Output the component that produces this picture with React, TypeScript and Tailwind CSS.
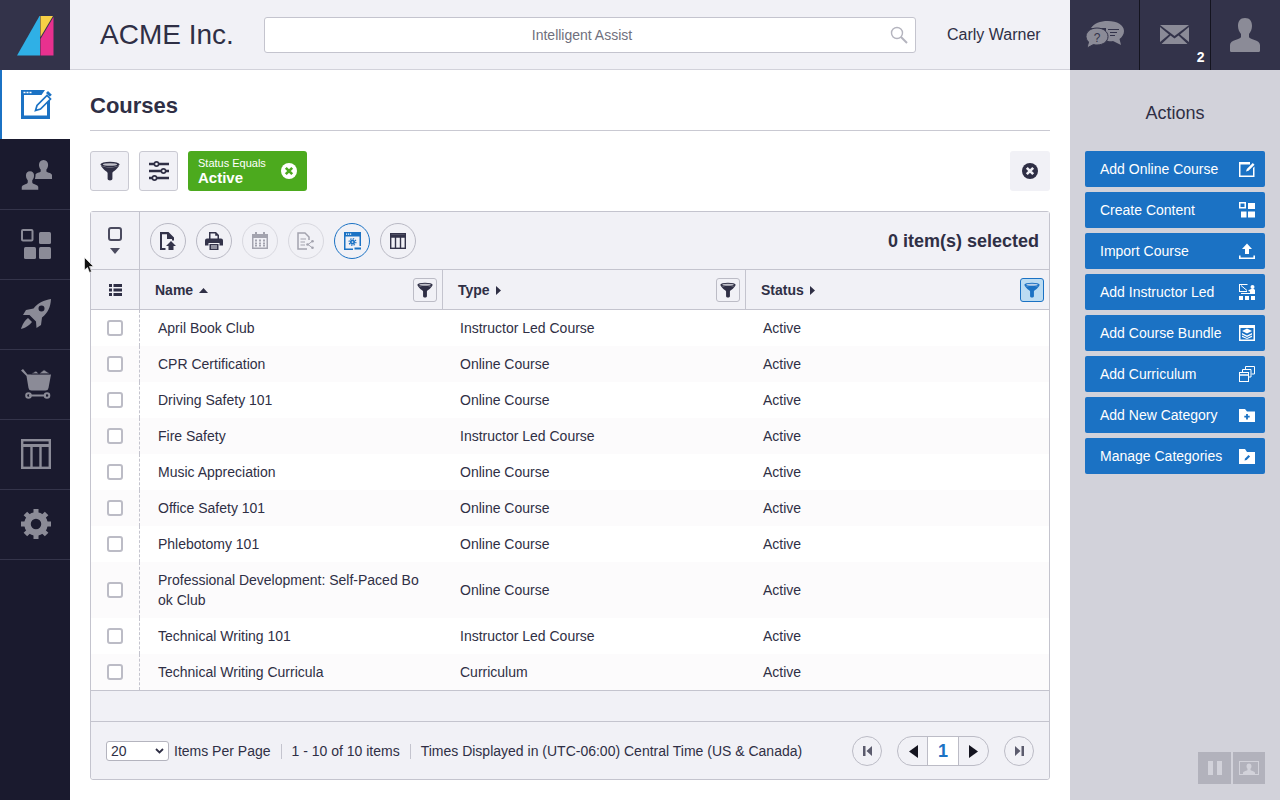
import React from "react";

const Funnel = ({ c = "#2f2f45", s = 20 }: { c?: string; s?: number }) => (
  <svg width={s} height={s} viewBox="0 0 20 20">
    <ellipse cx="10" cy="3.6" rx="9.6" ry="2.8" fill={c} />
    <ellipse cx="10" cy="3.500" rx="7.200" ry="1.300" fill="#f1f1f6" opacity="0.75" />
    <path d="M.8 4.500 C3 9 7.600 10.500 7.600 12 V17.800 C7.600 20 12.400 20 12.400 17.800 V12 C12.400 10.500 17 9 19.200 4.500 C15 7 5 7 .8 4.500Z" fill={c} />
  </svg>
);

const Sliders = () => (
  <svg width="22" height="22" viewBox="0 0 22 22" fill="none" stroke="#2f2f45" strokeWidth="2.300">
    <path d="M1 4H6M11 4H21M1 11H13M18 11H21M1 18H4M9 18H21" />
    <circle cx="8.500" cy="4" r="2.100" strokeWidth="1.600" />
    <circle cx="15.500" cy="11" r="2.100" strokeWidth="1.600" />
    <circle cx="6.500" cy="18" r="2.100" strokeWidth="1.600" />
  </svg>
);

const XCircle = ({ bg, fg, s = 16 }: { bg: string; fg: string; s?: number }) => (
  <svg width={s} height={s} viewBox="0 0 16 16">
    <circle cx="8" cy="8" r="8" fill={bg} />
    <path d="M4.800 4.800L11.200 11.200M11.200 4.800L4.800 11.200" stroke={fg} strokeWidth="2.600" />
  </svg>
);

const Logo = () => (
  <svg width="40" height="42" viewBox="0 0 40 42">
    <path d="M1 40.500 L23.500 1 H24 V40.500Z" fill="#2fb0e6" />
    <path d="M24.500 1 H37 L24.500 22Z" fill="#f7cf45" />
    <path d="M24.500 24 L37.500 2 V40.500 H24.500Z" fill="#e8318f" />
  </svg>
);

const G = "#8b8b97";

const NavCourse = () => (
  <svg width="31" height="29" viewBox="0 0 31 29">
    <path d="M0 0H24L20.500 5H3V25.500H26V12L29 9V29H0Z" fill="#1b72c4" />
    <path d="M2.500 1.700h2v1.600h-2zM5.500 1.700h2v1.600h-2zM8.500 1.700h2v1.600h-2z" fill="#fff" />
    <path d="M14.500 20.500l1.500-5L26 5.500l3.500 3.500-10 10z" fill="#fff" stroke="#1b72c4" strokeWidth="1.700" />
    <path d="M27 1l3.800 3.800-2 2-3.800-3.800z" fill="#1b72c4" />
  </svg>
);
const Bust = ({ x, y, k }: { x: number; y: number; k: number }) => (
  <path
    transform={`translate(${x} ${y}) scale(${k})`}
    d="M9 0c3.200 0 4.800 2.300 4.800 5.300 0 2-.8 3.700-1.800 4.700v2c0 1 6 1.400 6 4.200V20H0v-3.800c0-2.800 6-3.200 6-4.200v-2C5 9 4.200 7.300 4.200 5.300 4.200 2.300 5.800 0 9 0Z"
  />
);
const NavUsers = () => (
  <svg width="31" height="31" viewBox="0 0 31 31" fill={G}>
    <Bust x={14} y={0} k={0.95} />
    <g stroke="#1a1a2e" strokeWidth="1.500"><Bust x={0} y={10.500} k={1} /></g>
  </svg>
);
const NavGrid = () => (
  <svg width="30" height="30" viewBox="0 0 30 30" fill={G}>
    <rect x="1" y="1" width="10.500" height="10.500" rx="1" fill="none" stroke={G} strokeWidth="2" />
    <rect x="18" y="3" width="12" height="12" rx="1.500" />
    <rect x="3" y="18" width="12" height="12" rx="1.500" />
    <rect x="18" y="18" width="12" height="12" rx="1.500" />
  </svg>
);
const NavRocket = () => (
  <svg width="30" height="30" viewBox="0 0 30 30" fill={G}>
    <path fillRule="evenodd" d="M30 0C29.500 8 27 14 21 18.500L20 26l-4.500 3-.5-6.500-6.500-6.500L2 16l3-5 7.500-1.500C17 4 23 1 30 0ZM20.500 6.500a3 3 0 1 0 0 6 3 3 0 0 0 0-6Z" />
    <path d="M7 19l4 4c-2 3-7 6-11 7 1-4 4-9 7-11Z" />
  </svg>
);
const NavCart = () => (
  <svg width="30" height="30" viewBox="0 0 30 30" fill={G}>
    <path d="M0 1.500l2-1.500 4.500 5.500H30l-2.500 13.500a3 3 0 0 1-3 2.500H10.500A3 3 0 0 1 7.500 19L5.500 7Z" />
    <path d="M10 4.800l5-2.800 3 2.800zM18 4.800l5-4 6 4z" stroke="#1a1a2e" strokeWidth=".6" />
    <path d="M8 26.500H25" stroke={G} strokeWidth="2" />
    <circle cx="7.500" cy="26.500" r="2.300" fill="none" stroke={G} strokeWidth="2" />
    <circle cx="26" cy="26.500" r="2.300" fill="none" stroke={G} strokeWidth="2" />
  </svg>
);
const NavTable = () => (
  <svg width="30" height="30" viewBox="0 0 30 30" fill="none" stroke={G} strokeWidth="2.400">
    <rect x="1.200" y="1.200" width="27.600" height="27.600" />
    <path d="M1 6.500H29" strokeWidth="3" />
    <path d="M10.500 6V29M19.500 6V29" />
  </svg>
);
const NavGear = () => (
  <svg width="30" height="30" viewBox="0 0 30 30">
    <circle cx="15" cy="15" r="8.500" fill="none" stroke={G} strokeWidth="6.500" />
    <g stroke={G} strokeWidth="5">
      <path d="M15 0V6M15 24V30M0 15H6M24 15H30M4.400 4.400L8.600 8.600M21.400 21.400L25.600 25.600M4.400 25.600L8.600 21.400M21.400 8.600L25.600 4.400" />
    </g>
  </svg>
);

const Chat = () => (
  <svg width="40" height="30" viewBox="0 0 40 30">
    <path d="M23 1c9 0 16 4 16 10 0 3.500-2 6-4.500 8l1.500 6-8-4c-1.500.3-3 .3-5 0l-2-1 0-12L6 8c3-4.500 9-7 17-7Z" fill={G} />
    <path d="M12 8c6 0 11 3.500 11 8.500S18 25 12 25c-1.500 0-2.500-.1-3.500-.5L2 28l1.500-6C2 20.500 1 18.500 1 16.500 1 11.500 6 8 12 8Z" fill={G} stroke="#33334a" strokeWidth="1" />
    <text x="12" y="21.500" textAnchor="middle" fontSize="12" fontFamily="Liberation Sans" fill="#33334a">?</text>
    <path d="M23 9.500H34M25 12.500H32M25 15.500H30" stroke="#33334a" strokeWidth="1" />
  </svg>
);
const Mail = () => (
  <svg width="29" height="19" viewBox="0 0 29 19" fill={G}>
    <path d="M0 0H29L14.500 11Z" />
    <path d="M0 2l9 7.500L0 17ZM29 2l-9 7.500L29 17ZM1.500 19L10.500 10.500l4 3 4-3 9 8.500Z" />
  </svg>
);
const User = () => (
  <svg width="30" height="34" viewBox="0 0 30 34" fill={G}>
    <path d="M15 0c5 0 7 3.500 7 8 0 3-1.300 6-3 8v3c0 2.500 11 2.500 11 8v5.500c0 1-.8 1.500-1.500 1.500H1.500C.8 34 0 33.500 0 32.500V27c0-5.500 11-5.500 11-8v-3c-1.700-2-3-5-3-8 0-4.500 2-8 7-8Z" />
  </svg>
);

const WHITE = "#fff";
const IAddOnline = () => (
  <svg width="16" height="16" viewBox="0 0 16 16">
    <path d="M0 1H11L10 2.500H1.500V14.500H14V7L15.500 5.500V16H0Z" fill={WHITE} />
    <path d="M0 1h11v2.500H0z" fill={WHITE} />
    <path d="M7 10.500l.8-2.500 6-6 1.700 1.700-6 6z" fill={WHITE} />
  </svg>
);
const ICreate = () => (
  <svg width="16" height="16" viewBox="0 0 16 16" fill={WHITE}>
    <path fillRule="evenodd" d="M0 0h7v6.500H0ZM1.500 1.500V5h4V1.500Z" />
    <rect x="9" y="1" width="7" height="6" />
    <rect x="2" y="9.500" width="5.500" height="6" />
    <rect x="9" y="9.500" width="7" height="6" />
  </svg>
);
const IImport = () => (
  <svg width="16" height="16" viewBox="0 0 16 16" fill={WHITE}>
    <path d="M8 .5L13 6H10V11H6V6H3Z" />
    <path d="M0 12.500H1.600V14.500H14.400V12.500H16V16H0Z" />
  </svg>
);
const IInstructor = () => (
  <svg width="16" height="16" viewBox="0 0 16 16" fill={WHITE}>
    <path d="M0 0H9L8 1H1V7H8V8H0Z" />
    <path d="M2 1.500L8 6.500" stroke={WHITE} strokeWidth="1" />
    <circle cx="13.500" cy="3" r="2" />
    <path d="M10 6l2-1h3l1 1v4H11V7.500L9 7Z" />
    <path d="M0 12h4v4H0zM6 12h4v4H6zM12 12h4v4h-4z" />
    <path d="M2 9.500H14" stroke={WHITE} strokeWidth="1" />
  </svg>
);
const IBundle = () => (
  <svg width="16" height="16" viewBox="0 0 16 16" fill={WHITE}>
    <path fillRule="evenodd" d="M0 0H16V16H0ZM1.500 3V14.500H14.500V3Z" />
    <path d="M8 3.500L13 6 8 8.500 3 6Z" />
    <path d="M3 8l5 2.500L13 8v1.500L8 12 3 9.500Z" />
    <path d="M3 10.500L8 13l5-2.500V12L8 14 3 12Z" />
  </svg>
);
const ICurriculum = () => (
  <svg width="16" height="16" viewBox="0 0 16 16" fill="none" stroke={WHITE} strokeWidth="1">
    <rect x=".5" y="6.500" width="9" height="9" />
    <path d="M.5 9h9" strokeWidth="1.500" />
    <path d="M3.500 6V3.500h8.500V11H10" />
    <path d="M6.500 3V.5H15.500V8H12.500" />
  </svg>
);
const IFolderPlus = () => (
  <svg width="16" height="13" viewBox="0 0 16 13">
    <path d="M0 0H6L8 2.500H16V13H0Z" fill={WHITE} />
    <path d="M8 5V10.500M5.300 7.700H10.700" stroke="#1b72c4" strokeWidth="1.800" />
  </svg>
);
const IFolderEdit = () => (
  <svg width="16" height="15" viewBox="0 0 16 15">
    <path d="M0 0H6L8 3H16V15H0Z" fill={WHITE} />
    <path d="M5.500 11.500l.6-2 3.400-3.500 1.600 1.600-3.500 3.400Z" fill="#1b72c4" />
  </svg>
);

const actions: [string, React.ReactNode][] = [
  ["Add Online Course", <IAddOnline />],
  ["Create Content", <ICreate />],
  ["Import Course", <IImport />],
  ["Add Instructor Led", <IInstructor />],
  ["Add Course Bundle", <IBundle />],
  ["Add Curriculum", <ICurriculum />],
  ["Add New Category", <IFolderPlus />],
  ["Manage Categories", <IFolderEdit />],
];

const D = "#33334a";
const TUpload = () => (
  <svg width="18" height="18" viewBox="0 0 18 18">
    <path d="M1 0H9.500L15 5.500V8.500H13V7H8V2.300H3V16H6.500V18H1Z" fill={D} />
    <path d="M12 9l5 5H14.500V18H9.500V14H7Z" fill={D} />
  </svg>
);
const TPrint = () => (
  <svg width="18" height="18" viewBox="0 0 18 18" fill={D}>
    <path fillRule="evenodd" d="M4 0H11L14 3V7H12.500V3.800H10.200V1.500H5.500V7H4Z" />
    <path fillRule="evenodd" d="M2 6.500H16A2 2 0 0 1 18 8.500V13.500H14.500V11H3.500V13.500H0V8.500A2 2 0 0 1 2 6.500Z" />
    <path d="M4.500 12H13.500V18H4.500ZM6 13.500V14.500H12V13.500ZM6 15.500V16.500H12V15.500Z" fillRule="evenodd" />
  </svg>
);
const C2 = "#a3a3ae";
const TCal = () => (
  <svg width="16" height="17" viewBox="0 0 16 17" fill={C2}>
    <path fillRule="evenodd" d="M0 2H3V0H5V2H11V0H13V2H16V17H0ZM1.500 6V15.500H14.500V6Z" />
    <path d="M3 7.500h2v2H3zM7 7.500h2v2H7zM11 7.500h2v2h-2zM3 10.500h2v2H3zM7 10.500h2v2H7zM11 10.500h2v2h-2zM3 13h2v1.500H3zM7 13h2v1.500H7zM11 13h2v1.500h-2z" />
  </svg>
);
const TShare = () => (
  <svg width="18" height="18" viewBox="0 0 18 18" fill="none" stroke={C2} strokeWidth="1.500">
    <path d="M10 17H1V1H8L12 5V8" />
    <path d="M3.500 7H9M3.500 10H8M3.500 13H8" strokeWidth="1.100" />
    <path d="M11 12.500L15 9.500M11 12.500L15 15.500" strokeWidth="1" />
    <circle cx="10.500" cy="12.500" r="1.300" fill={C2} stroke="none" />
    <circle cx="15.500" cy="9.300" r="1.300" fill={C2} stroke="none" />
    <circle cx="15.500" cy="15.700" r="1.300" fill={C2} stroke="none" />
  </svg>
);
const TView = () => (
  <svg width="17" height="18" viewBox="0 0 17 18" fill="#1b72c4">
    <path fillRule="evenodd" d="M0 0H17V14H15.500V4.500H1.500V16.500H9V18H0Z" />
    <circle cx="8.500" cy="10" r="1.700" fill="none" stroke="#1b72c4" strokeWidth="1.700" />
    <circle cx="8.500" cy="10" r="3.400" fill="none" stroke="#1b72c4" strokeWidth="1.200" strokeDasharray="1.400 1.250" />
    <path d="M10.500 15.500H17V17.500H10.500Z" />
    <path d="M2 1.500h1.200v1.200H2zM4 1.500h1.200v1.200H4zM6 1.500h1.200v1.200H6z" fill="#fff" />
  </svg>
);
const TCols = () => (
  <svg width="16" height="16" viewBox="0 0 16 16" fill="none" stroke={D} strokeWidth="1.400">
    <rect x=".7" y=".7" width="14.600" height="14.600" />
    <path d="M0 3H16" strokeWidth="3.500" />
    <path d="M5.500 4V16M10.500 4V16" />
  </svg>
);

const CircleBtn = ({ children, active, faint }: { children: React.ReactNode; active?: boolean; faint?: boolean }) => (
  <div
    className={`w-9 h-9 rounded-full border flex items-center justify-center ${
      active ? "border-[#1b72c4] bg-[#f1f1f6]" : faint ? "border-[#d8d8df]" : "border-[#b9b9c4]"
    }`}
  >
    {children}
  </div>
);

const Check = ({ s = "w-4 h-4" }: { s?: string }) => (
  <div className={`${s} rounded-[3px] border-2 border-[#bcbcc6] bg-white`} />
);

const HeadFilter = ({ active }: { active?: boolean }) => (
  <div
    className={`w-6 h-6 rounded-[3px] border flex items-center justify-center ${
      active ? "border-[#1b72c4] bg-[#bcdcf2]" : "border-[#bcbcc6] bg-[#f1f1f6]"
    }`}
  >
    <Funnel c={active ? "#1b72c4" : "#2f2f45"} s={16} />
  </div>
);

const rows: [string, string][] = [
  ["April Book Club", "Instructor Led Course"],
  ["CPR Certification", "Online Course"],
  ["Driving Safety 101", "Online Course"],
  ["Fire Safety", "Instructor Led Course"],
  ["Music Appreciation", "Online Course"],
  ["Office Safety 101", "Online Course"],
  ["Phlebotomy 101", "Online Course"],
  ["Professional Development: Self-Paced Book Club", "Online Course"],
  ["Technical Writing 101", "Instructor Led Course"],
  ["Technical Writing Curricula", "Curriculum"],
];

const NavItem = ({ children }: { children: React.ReactNode }) => (
  <div className="h-[70px] shrink-0 border-b border-[#34344a] flex items-center justify-center pl-[2px] pb-[1px]">{children}</div>
);

const TopBtn = ({ children, badge }: { children: React.ReactNode; badge?: string }) => (
  <div className="relative flex-1 h-full bg-[#33334a] flex items-center justify-center border-l border-[#14141f] first:border-l-0">
    {children}
    {badge && <span className="absolute right-[5px] bottom-[5px] text-white font-bold text-[14px] leading-4">{badge}</span>}
  </div>
);

export default function App() {
  return (
    <div className="w-[1280px] h-[800px] overflow-hidden relative flex flex-col font-['Liberation_Sans',Arial,sans-serif] text-[#2f2f45] text-[14px]">
      <header className="h-[70px] shrink-0 flex bg-[#f1f1f6]">
        <div className="w-[70px] bg-[#33334a] flex items-center justify-center pl-[2px] pt-[1px]">
          <Logo />
        </div>
        <div className="flex-1 flex items-center border-b border-[#d2d2da]">
          <div className="w-[194px] pl-[30px] text-[28px] leading-none">ACME Inc.</div>
          <div className="w-[652px] h-[36px] bg-white border border-[#c4c4ce] rounded-[3px] relative flex items-center justify-center pr-[16px] pt-[2px] text-[#6f6f7d]">
            Intelligent Assist
            <svg className="absolute right-[7px] top-[8px]" width="18" height="18" viewBox="0 0 18 18" fill="none" stroke="#b4b4be" strokeWidth="1.400">
              <circle cx="7" cy="7" r="5.500" />
              <path d="M11 11L17 17" strokeWidth="2" />
            </svg>
          </div>
          <div className="ml-[31px] text-[16px]">Carly Warner</div>
        </div>
        <div className="w-[210px] flex">
          <TopBtn><Chat /></TopBtn>
          <TopBtn badge="2"><span className="block -mt-[2px]"><Mail /></span></TopBtn>
          <TopBtn><User /></TopBtn>
        </div>
      </header>

      <div className="flex-1 flex min-h-0">
        <nav className="w-[70px] shrink-0 bg-[#1a1a2e] flex flex-col">
          <div className="h-[69px] shrink-0 bg-white border-l-2 border-[#1b72c4] flex items-center justify-center pb-[1px]">
            <NavCourse />
          </div>
          <div className="h-px shrink-0" />
          <NavItem><span className="block mt-[2px]"><NavUsers /></span></NavItem>
          <NavItem><NavGrid /></NavItem>
          <NavItem><NavRocket /></NavItem>
          <NavItem><NavCart /></NavItem>
          <NavItem><NavTable /></NavItem>
          <NavItem><NavGear /></NavItem>
        </nav>

        <main className="flex-1 bg-white px-5 min-w-0">
          <div className="h-[61px] border-b border-[#c9c9d2] flex items-center pt-[12px]">
            <h1 className="text-[22px] font-bold leading-none">Courses</h1>
          </div>
          <div className="mt-5 h-10 flex items-center">
            <div className="w-[39px] h-10 rounded-[3px] border border-[#c9c9d2] bg-[#f1f1f6] flex items-center justify-center">
              <Funnel />
            </div>
            <div className="ml-[10px] w-[39px] h-10 rounded-[3px] border border-[#c9c9d2] bg-[#f1f1f6] flex items-center justify-center">
              <Sliders />
            </div>
            <div className="ml-[10px] w-[119px] h-10 rounded-[3px] bg-[#4caa1e] text-white flex items-center pl-[10px] pr-[10px] justify-between">
              <div className="flex flex-col">
                <span className="text-[11px] leading-[12px]">Status Equals</span>
                <span className="text-[15px] font-bold leading-[15px] mt-[1px]">Active</span>
              </div>
              <XCircle bg="#fff" fg="#4caa1e" />
            </div>
            <div className="ml-auto w-10 h-10 rounded-[3px] bg-[#f1f1f6] flex items-center justify-center">
              <XCircle bg="#2f2f45" fg="#f1f1f6" />
            </div>
          </div>

          <div className="mt-5 h-[569px] border border-[#c4c4ce] rounded-[3px] flex flex-col">
            <div className="h-[58px] shrink-0 flex bg-[#f1f1f6] border-b border-[#c4c4ce]">
              <div className="w-[49px] shrink-0 border-r border-[#c4c4ce] flex flex-col items-center pt-[15px]">
                <div className="w-[14px] h-[14px] rounded-[3px] border-2 border-[#4b4b5f]" />
                <svg className="mt-[7px]" width="10" height="6" viewBox="0 0 10 6"><path d="M0 0H10L5 6Z" fill="#4b4b5f" /></svg>
              </div>
              <div className="flex-1 flex items-center pl-[10px] gap-[10px]">
                <CircleBtn><TUpload /></CircleBtn>
                <CircleBtn><TPrint /></CircleBtn>
                <CircleBtn faint><TCal /></CircleBtn>
                <CircleBtn faint><TShare /></CircleBtn>
                <CircleBtn active><TView /></CircleBtn>
                <CircleBtn><TCols /></CircleBtn>
                <div className="ml-auto pr-[10px] pt-[2px] font-bold text-[18px]">0 item(s) selected</div>
              </div>
            </div>

            <div className="h-[40px] shrink-0 flex bg-[#f1f1f6] border-b border-[#c4c4ce] font-bold">
              <div className="w-[49px] shrink-0 border-r border-[#c4c4ce] flex items-center justify-center">
                <svg width="13" height="12" viewBox="0 0 13 12" fill="#2f2f45">
                  <path d="M0 0h3v3H0zM4.500 0H13v3H4.500zM0 4.500h3v3H0zM4.500 4.500H13v3H4.500zM0 9h3v3H0zM4.500 9H13v3H4.500z" />
                </svg>
              </div>
              <div className="w-[303px] shrink-0 border-r border-[#c4c4ce] flex items-center pl-[15px] pr-[5px]">
                <span className="pt-[2px]">Name</span>
                <svg className="ml-[6px] mt-[1px]" width="9" height="5" viewBox="0 0 9 5"><path d="M0 5H9L4.500 0Z" fill="#2f2f45" /></svg>
                <span className="ml-auto"><HeadFilter /></span>
              </div>
              <div className="w-[303px] shrink-0 border-r border-[#c4c4ce] flex items-center pl-[15px] pr-[5px]">
                <span className="pt-[2px]">Type</span>
                <svg className="ml-[6px] mt-[1px]" width="5" height="9" viewBox="0 0 5 9"><path d="M0 0V9L5 4.500Z" fill="#2f2f45" /></svg>
                <span className="ml-auto"><HeadFilter /></span>
              </div>
              <div className="flex-1 flex items-center pl-[15px] pr-[5px]">
                <span className="pt-[2px]">Status</span>
                <svg className="ml-[6px] mt-[1px]" width="5" height="9" viewBox="0 0 5 9"><path d="M0 0V9L5 4.500Z" fill="#2f2f45" /></svg>
                <span className="ml-auto"><HeadFilter active /></span>
              </div>
            </div>

            <div className="shrink-0">
              {rows.map(([n, t], i) => (
                <div key={n} className={`flex items-center ${i === 7 ? "h-[56px]" : "h-[36px]"} ${i % 2 ? "bg-[#fcfbfc]" : "bg-white"}`}>
                  <div className="w-[49px] h-full shrink-0 border-r border-dashed border-[#c4c4ce] flex items-center justify-center">
                    <Check />
                  </div>
                  <div className="w-[303px] shrink-0 pl-[18px] pr-[22px] leading-5 break-all">{n}</div>
                  <div className="w-[303px] shrink-0 pl-[17px]">{t}</div>
                  <div className="pl-[17px]">Active</div>
                </div>
              ))}
            </div>

            <div className="h-[32px] shrink-0 bg-[#f1f1f6] border-y border-[#c4c4ce]" />

            <div className="flex-1 bg-[#f1f1f6] flex items-center pl-[15px] pr-[15px] pt-[1px] rounded-b-[3px]">
              <div className="w-[63px] h-[20px] bg-white border border-[#b4b4be] rounded-[3px] flex items-center justify-between pl-[4px] pr-[4px] text-[14px]">
                <span>20</span>
                <svg width="9" height="6" viewBox="0 0 9 6" fill="none" stroke="#2f2f45" strokeWidth="1.800"><path d="M1 1L4.500 4.500L8 1" /></svg>
              </div>
              <span className="ml-[5px]">Items Per Page</span>
              <span className="mx-[10px] w-px h-[15px] bg-[#c4c4ce]" />
              <span>1 - 10 of 10 items</span>
              <span className="mx-[10px] w-px h-[15px] bg-[#c4c4ce]" />
              <span>Times Displayed in (UTC-06:00) Central Time (US &amp; Canada)</span>
              <div className="ml-auto flex items-center">
                <div className="w-[30px] h-[30px] rounded-full border border-[#bcbcc6] flex items-center justify-center">
                  <svg width="9" height="10" viewBox="0 0 9 10" fill="#5b5b6d"><path d="M0 0H2.500V10H0ZM9 0V10L3.500 5Z" /></svg>
                </div>
                <div className="ml-[15px] h-[30px] w-[92px] rounded-full border border-[#bcbcc6] flex overflow-hidden">
                  <div className="w-[29px] flex items-center justify-center pl-[1px]">
                    <svg width="9" height="13" viewBox="0 0 9 13"><path d="M9 0V13L0 6.500Z" fill="#14141f" /></svg>
                  </div>
                  <div className="flex-1 bg-white border-x border-[#bcbcc6] flex items-center justify-center text-[#1b72c4] font-bold text-[18px]">1</div>
                  <div className="w-[29px] flex items-center justify-center pr-[1px]">
                    <svg width="9" height="13" viewBox="0 0 9 13"><path d="M0 0V13L9 6.500Z" fill="#14141f" /></svg>
                  </div>
                </div>
                <div className="ml-[15px] w-[30px] h-[30px] rounded-full border border-[#bcbcc6] flex items-center justify-center">
                  <svg width="9" height="10" viewBox="0 0 9 10" fill="#5b5b6d"><path d="M9 0H6.500V10H9ZM0 0V10L5.500 5Z" /></svg>
                </div>
              </div>
            </div>
          </div>
        </main>

        <aside className="w-[210px] shrink-0 bg-[#d2d2da] flex flex-col items-center relative">
          <div className="mt-[33px] text-[18px] leading-[20px]">Actions</div>
          <div className="mt-[28px] flex flex-col gap-[5px]">
            {actions.map(([label, icon]) => (
              <div key={label} className="w-[180px] h-[36px] rounded-[2px] bg-[#1b72c4] text-white flex items-center justify-between pl-[15px] pr-[10px]">
                <span>{label}</span>
                <span className="w-4 flex justify-center">{icon}</span>
              </div>
            ))}
          </div>
          <div className="absolute right-[15px] bottom-[16px] flex gap-[2px]">
            <div className="w-[33px] h-[32px] bg-[#b2b2bc] flex items-center justify-center gap-[4px]">
              <span className="w-[5px] h-[14px] bg-[#d2d2da]" />
              <span className="w-[5px] h-[14px] bg-[#d2d2da]" />
            </div>
            <div className="w-[32px] h-[32px] bg-[#b2b2bc] flex items-center justify-center">
              <svg width="20" height="14" viewBox="0 0 20 14">
                <path fillRule="evenodd" d="M0 0H20V14H0ZM1 1V13H19V1Z" fill="#d2d2da" />
                <path d="M10 2.500c1.700 0 2.500 1.300 2.500 2.800 0 1-.5 2-1 2.500V9c0 .8 4.500 1 4.500 3v1H4v-1c0-2 4.500-2.200 4.500-3V7.800c-.5-.5-1-1.500-1-2.500 0-1.500.8-2.800 2.500-2.800Z" fill="#d2d2da" />
              </svg>
            </div>
          </div>
        </aside>
      </div>

      <svg className="absolute left-[84px] top-[257px]" width="11" height="17" viewBox="0 0 11 17">
        <path d="M0.500 0.500V13L3.500 10.500L5.500 15.500L7.500 14.500L5.500 9.500H9.500Z" fill="#111" stroke="#fff" strokeWidth=".6" />
      </svg>
    </div>
  );
}
